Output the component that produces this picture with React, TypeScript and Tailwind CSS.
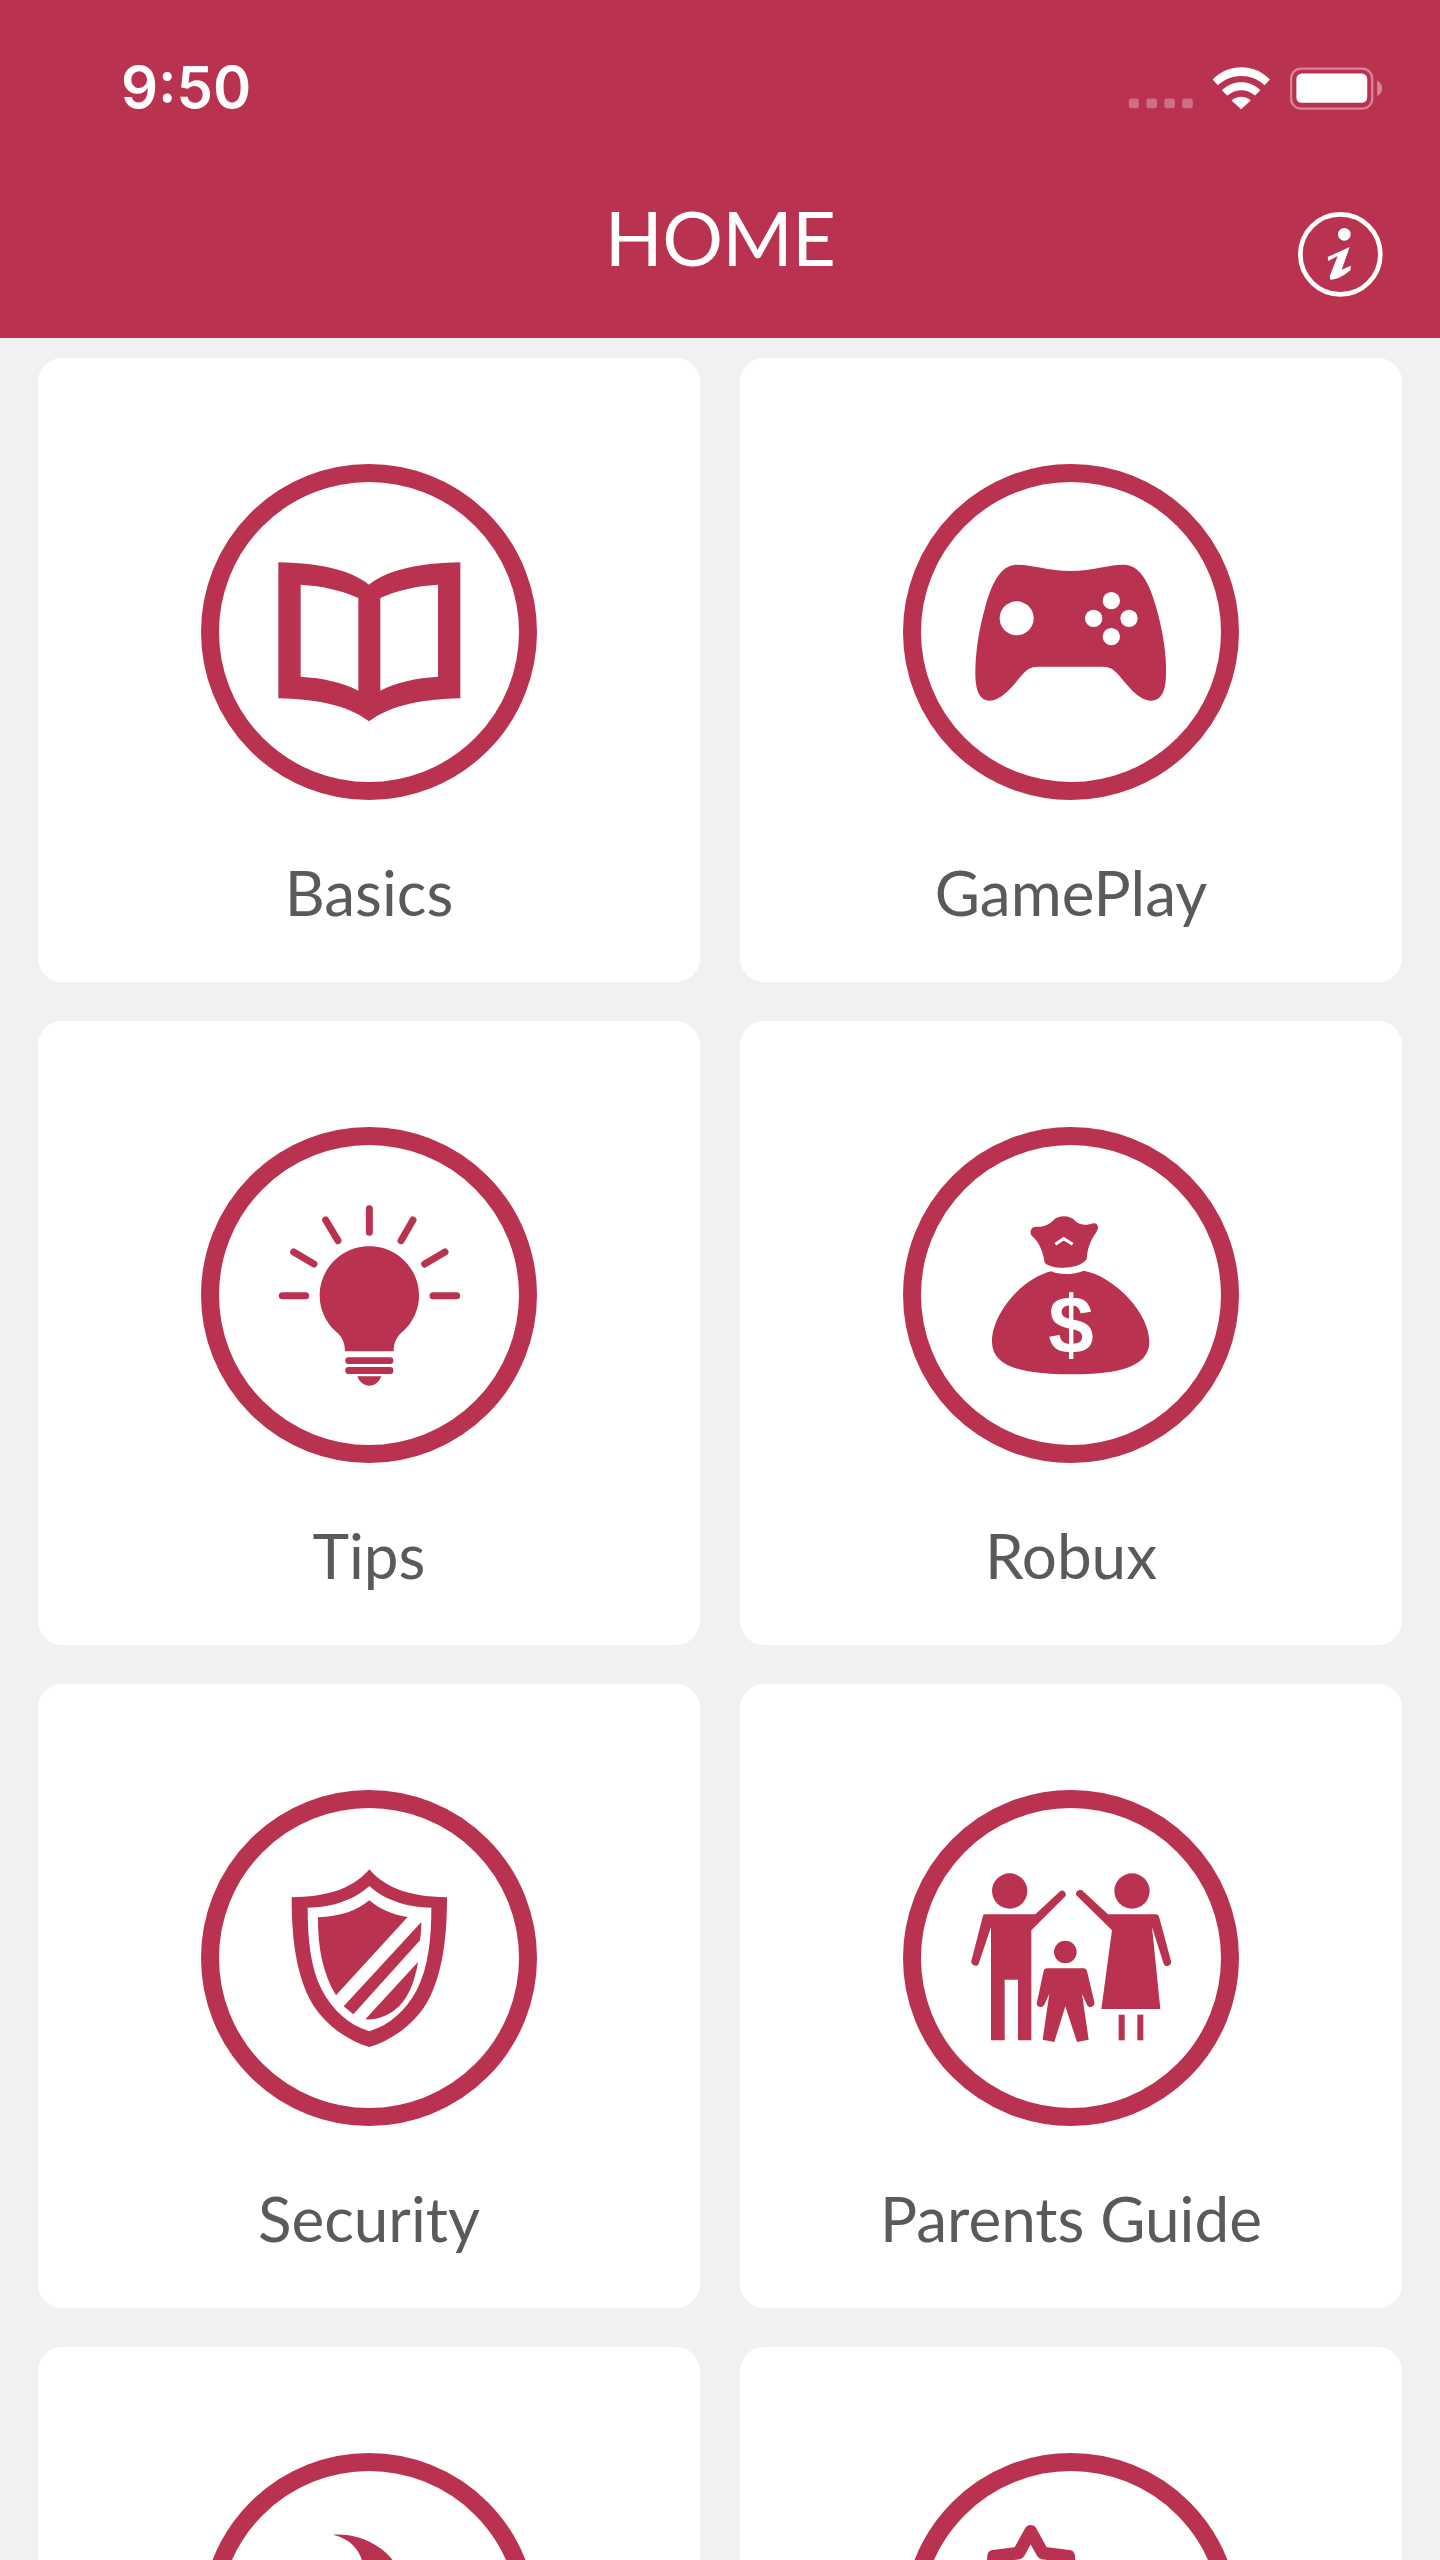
import React from "react";

const RED = "#b9324f";

function Shell({ cx, cy, children }: { cx: number; cy: number; children?: React.ReactNode }) {
  return (
    <svg width={336} height={336} viewBox={`${cx - 504} ${cy - 504} 1008 1008`} className="block">
      <circle cx={cx} cy={cy} r={477} fill="none" stroke={RED} strokeWidth={54} />
      {children}
    </svg>
  );
}

const BookIcon = () => (
  <Shell cx={569} cy={574}>
    <path
      fillRule="evenodd"
      fill={RED}
      d="M297 365C410 367 510 385 569 432C628 385 730 367 843 365L843 773C740 775 640 790 569 842C500 790 400 775 297 773ZM364 432L364 708C430 712 490 725 537 750L537 472C490 450 430 436 364 432ZM776 432C710 436 650 450 603 472L603 750C650 725 710 712 776 708Z"
    />
  </Shell>
);

const PadIcon = () => (
  <Shell cx={577} cy={576}>
    <path
      fill={RED}
      d="M405 375C450 370 500 393 577 393C650 393 700 370 745 375C790 382 815 440 832 500C852 570 864 640 862 700C862 750 850 782 818 782C780 782 750 740 720 705C705 688 695 680 670 680L480 680C455 680 445 688 430 705C400 740 370 782 332 782C302 782 290 750 290 700C290 640 300 570 320 500C337 440 360 382 405 375Z"
    />
    <g fill="#fff">
      <circle cx={414} cy={535} r={51} />
      <circle cx={698} cy={482} r={26} />
      <circle cx={645} cy={535} r={26} />
      <circle cx={751} cy={535} r={26} />
      <circle cx={698} cy={590} r={26} />
    </g>
  </Shell>
);

const BulbIcon = () => (
  <Shell cx={569} cy={556}>
    <path
      fill={RED}
      d="M570 410C652 410 719 476 719 558C719 600 700 638 672 664C655 678 643 695 643 725L497 725C497 695 485 678 468 664C440 638 421 600 421 558C421 476 488 410 570 410Z"
    />
    <rect x={498} y={743} width={144} height={20} rx={9} fill={RED} />
    <rect x={498} y={772} width={144} height={21} rx={9} fill={RED} />
    <path fill={RED} d="M534 800L606 800C600 818 585 828 570 828C555 828 540 818 534 800Z" />
    <g stroke={RED} strokeWidth={21} strokeLinecap="round">
      <line x1={570} y1={297} x2={570} y2={368} />
      <line x1={439} y1={331} x2={476} y2={393} />
      <line x1={701} y1={331} x2={665} y2={393} />
      <line x1={343} y1={427} x2={404} y2={463} />
      <line x1={797} y1={427} x2={736} y2={463} />
      <line x1={309} y1={558} x2={379} y2={558} />
      <line x1={761} y1={558} x2={832} y2={558} />
    </g>
  </Shell>
);

const BagIcon = () => (
  <Shell cx={577} cy={555}>
    <path
      fill={RED}
      d="M472 350C495 352 510 345 525 330C540 315 575 315 590 333C600 345 625 348 643 340C660 338 662 355 652 368C632 395 626 420 624 448C600 480 520 480 498 458C492 420 480 395 460 378C450 365 458 350 472 350Z"
    />
    <polyline points="530,403 555,386 582,403" fill="none" stroke="#fff" strokeWidth={9} />
    <path
      fill={RED}
      d="M518 484C540 495 585 495 615 482C710 500 812 610 812 695C812 770 720 793 577 793C430 793 340 770 340 695C340 610 430 505 518 484Z"
    />
    <text
      x={577}
      y={730}
      textAnchor="middle"
      fill="#fff"
      fontSize={245}
      fontWeight={700}
      fontFamily="'Liberation Sans', sans-serif"
    >
      $
    </text>
  </Shell>
);

const ShieldIcon = () => (
  <Shell cx={569} cy={563}>
    <path
      fillRule="evenodd"
      fill={RED}
      d="M570 297C610 345 680 380 803 381C803 480 795 590 752 680C715 755 640 810 570 830C500 810 425 755 388 680C345 590 337 480 337 381C460 380 530 345 570 297ZM570 347C530 385 460 412 385 412C385 500 392 590 428 660C460 720 510 765 570 783C630 765 680 720 712 660C748 590 756 500 756 412C680 412 610 385 570 347Z"
    />
    <path fill={RED} d="M570 390C600 415 640 435 685 440L470 675C430 610 415 530 416 441C480 440 535 420 570 390Z" />
    <path fill={RED} d="M726 455C726 470 725 490 722 510L522 732L493 708Z" />
    <path fill={RED} d="M716 575C705 640 685 690 645 720C620 738 590 750 558 747Z" />
  </Shell>
);

const FamilyIcon = () => (
  <Shell cx={577} cy={563}>
    <g fill={RED}>
      <circle cx={393} cy={362} r={53} />
      <path d="M318 432L470 432L545 362C553 356 566 368 560 378L458 480L458 810L418 810L418 628L378 628L378 810L337 810L337 470L300 580C295 592 275 585 278 572L312 440C313 435 315 432 318 432Z" />
      <circle cx={760} cy={362} r={53} />
      <path d="M832 432C838 432 840 436 842 442L877 572C880 586 860 594 855 580L820 470L845 716L668 716L700 480L593 375C588 365 600 355 610 360L688 432Z" />
      <rect x={720} y={733} width={18} height={77} />
      <rect x={776} y={733} width={18} height={77} />
      <circle cx={560} cy={545} r={34} />
      <path d="M505 594L615 594C620 594 623 597 625 602L647 695C650 710 630 716 625 703L610 670L630 808L595 815L560 708L527 815L492 808L512 670L497 703C490 716 470 710 475 695L495 602C497 597 500 594 505 594Z" />
    </g>
  </Shell>
);

const SwooshIcon = () => (
  <Shell cx={570} cy={544}>
    <path fill={RED} d="M462 285C530 280 600 310 640 360C680 420 690 520 660 620L545 620C560 500 560 420 548 360C540 330 510 295 462 285Z" />
  </Shell>
);

const StarIcon = () => (
  <Shell cx={577} cy={544}>
    <path
      d="M335 470L345 350L420 340L456 275L492 340L570 350L580 470"
      fill="none"
      stroke={RED}
      strokeWidth={38}
      strokeLinejoin="round"
    />
  </Shell>
);

function Card({ label, icon }: { label?: string; icon: React.ReactNode }) {
  return (
    <div className="flex h-[624px] flex-col items-center rounded-[24px] bg-white pt-[106px]">
      {icon}
      {label ? (
        <div className="mt-[56px] font-['Lato',sans-serif] text-[62px] leading-[72px] font-normal text-[#5a5a5a]">
          {label}
        </div>
      ) : null}
    </div>
  );
}

export default function App() {
  return (
    <div className="h-[2560px] overflow-hidden bg-[#f1f1f1]">
      <header className="h-[338px] bg-[#b9324f] text-white">
        <div className="flex items-start justify-between pt-[62px] pr-[57px] pl-[121px]">
          <span className="font-['Inter',sans-serif] text-[58px] leading-[50px] font-semibold">9:50</span>
          <svg width={255} height={48} viewBox="85 65 765 145" className="block">
            <g fill="#fff" opacity={0.3}>
              <rect x={85} y={175} width={30} height={30} rx={7} />
              <rect x={138} y={175} width={32} height={30} rx={7} />
              <rect x={192} y={175} width={32} height={30} rx={7} />
              <rect x={246} y={175} width={32} height={30} rx={7} />
            </g>
            <g fill="#fff">
              <path d="M338 118C385 68 465 68 511 118L495 135C455 98 395 98 354 135Z" />
              <path d="M366 150C400 118 450 118 482 150L466 166C440 145 410 145 382 166Z" />
              <path d="M395 181C412 166 438 166 453 181L424 208Z" />
            </g>
            <rect x={575} y={85} width={245} height={121} rx={30} fill="none" stroke="#fff" strokeWidth={7} opacity={0.4} />
            <rect x={591} y={100} width={214} height={88} rx={16} fill="#fff" />
            <path d="M835 122C855 130 855 160 835 168Z" fill="#fff" opacity={0.4} />
          </svg>
        </div>
        <div className="mt-[78px] grid grid-cols-[1fr_auto_1fr] items-start px-[57px]">
          <div />
          <h1 className="font-['Lato',sans-serif] text-[76px] leading-[94px] font-normal tracking-[-0.01em]">HOME</h1>
          <svg
            width={85}
            height={85}
            viewBox="595 515 255 255"
            className="mt-[22px] block justify-self-end"
          >
            <circle cx={722} cy={642} r={120} fill="none" stroke="#fff" strokeWidth={14} />
            <circle cx={734} cy={582} r={19} fill="#fff" />
            <path
              fill="#fff"
              d="M684 650L750 620L726 688L754 676L752 690C732 708 710 718 692 718L690 708L714 647L686 662Z"
            />
          </svg>
        </div>
      </header>
      <main className="grid grid-cols-2 gap-x-10 gap-y-[39px] px-[38px] pt-5">
        <Card label="Basics" icon={<BookIcon />} />
        <Card label="GamePlay" icon={<PadIcon />} />
        <Card label="Tips" icon={<BulbIcon />} />
        <Card label="Robux" icon={<BagIcon />} />
        <Card label="Security" icon={<ShieldIcon />} />
        <Card label="Parents Guide" icon={<FamilyIcon />} />
        <Card icon={<SwooshIcon />} />
        <Card icon={<StarIcon />} />
      </main>
    </div>
  );
}
